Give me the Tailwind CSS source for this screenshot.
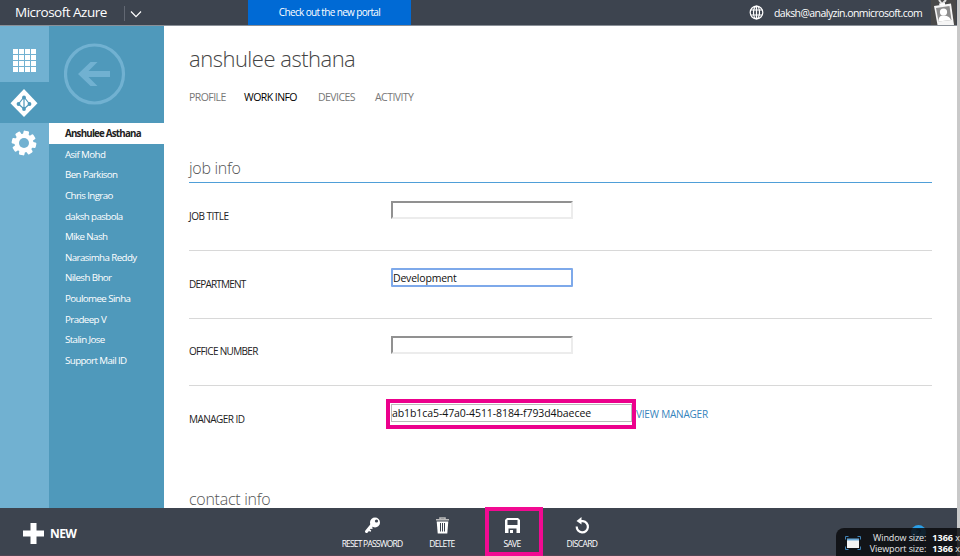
<!DOCTYPE html>
<html lang="en">
<head>
<meta charset="utf-8">
<title>Microsoft Azure</title>
<script src="https://cdn.jsdelivr.net/npm/@tailwindcss/browser@4"></script>
</head>
<body class="relative flex h-[556px] w-[960px] flex-col overflow-hidden bg-white font-['Open_Sans','Noto_Sans',sans-serif] text-[#222] whitespace-nowrap">
<header class="flex h-[26px] w-[957px] shrink-0 items-start border-b border-[#8a9098] bg-[#3d444f] text-white">
  <div class="w-[109px] pl-[15px] text-[13.500px] leading-[25px] tracking-[-0.500px]">Microsoft Azure</div>
  <div class="ml-[15px] mt-[6px] h-[15px] w-px bg-[#626873]"></div>
  <svg class="ml-[5px] mt-[10px] h-[9px] w-[12px]" viewBox="0 0 12 9" fill="none" stroke="#fff" stroke-width="1.2"><path d="M1 1.500 6 6.700 11 1.500"/></svg>
  <div class="ml-[106px] h-[25px] w-[163px] bg-[#006ad5] text-center text-[10px] font-medium leading-[25px] tracking-[-0.650px]">Check out the new portal</div>
  <svg class="ml-[338px] mt-[5px] h-[15px] w-[15px]" viewBox="0 0 15 15" fill="none" stroke="#fff" stroke-width="1.2"><circle cx="7.5" cy="7.5" r="6.300"/><ellipse cx="7.5" cy="7.5" rx="3" ry="6.300"/><path d="M7.500 1v13M1.800 5h11.400M1.800 10h11.400"/></svg>
  <div class="ml-[10px] w-[157px] text-[10.500px] font-medium leading-[26px] tracking-[-0.550px]">daksh@analyzin.onmicrosoft.com</div>
  <svg class="h-[25px] w-[25px] bg-[#494949]" viewBox="0 0 25 25"><path d="M8 0l3 4M15 0l-4 4" stroke="#ddd" stroke-width="2"/><path d="M3 6 20 3.500 23 25H6.500z" fill="#f5f5f5"/><path d="M5 8 18.500 6 20.500 20 7.500 21.500z" fill="#8d8d8d"/><path d="M8 3.500 14 3v2.500H8.500z" fill="#fff"/><circle cx="12.500" cy="12" r="3.600" fill="#fff"/><path d="M7.500 21.500c0-5 2-6 5-6s6 1 7.500 4.500z" fill="#fff"/></svg>
</header>
<div class="flex h-[482px] shrink-0">
  <nav class="flex w-[49px] flex-col bg-[#71b1d1]">
    <div class="flex h-[56px] items-center pl-[13px] pt-[13px]">
      <svg class="h-[23px] w-[23px]" viewBox="0 0 23 23" fill="#fff"><path d="M0 0h5v5H0zM6 0h5v5H6zM12 0h5v5h-5zM18 0h5v5h-5zM0 6h5v5H0zM6 6h5v5H6zM12 6h5v5h-5zM18 6h5v5h-5zM0 12h5v5H0zM6 12h5v5H6zM12 12h5v5h-5zM18 12h5v5h-5zM0 18h5v5H0zM6 18h5v5H6zM12 18h5v5h-5zM18 18h5v5h-5z"/></svg>
    </div>
    <div class="flex h-[41px] items-center bg-[#4f99bb] pl-[10px]">
      <svg class="h-[28px] w-[28px]" viewBox="0 0 28 28"><path d="M14 0 27.500 14.200 14 28 .5 14.200z" fill="#fff"/><g stroke="#4f99bb" stroke-width="1.200" fill="none"><path d="M14 8v12M14 8 8.500 15M14 8l5.500 7M8.500 15 14 20l5.500-5"/></g><g fill="#4f99bb"><circle cx="14" cy="8.500" r="1.900"/><circle cx="8.500" cy="15" r="1.900"/><circle cx="19.500" cy="15" r="1.900"/><circle cx="14" cy="20" r="1.900"/></g></svg>
    </div>
    <div class="pl-[11px] pt-[7px]">
      <svg class="h-[26px] w-[26px]" viewBox="-13 -13 26 26"><g fill="#fff"><circle r="9.600"/><rect x="-2.800" y="-12.300" width="5.600" height="24.600" rx="1.200" transform="rotate(12)"/><rect x="-2.800" y="-12.300" width="5.600" height="24.600" rx="1.200" transform="rotate(57)"/><rect x="-2.800" y="-12.300" width="5.600" height="24.600" rx="1.200" transform="rotate(102)"/><rect x="-2.800" y="-12.300" width="5.600" height="24.600" rx="1.200" transform="rotate(147)"/></g><circle r="5" fill="#71b1d1"/></svg>
    </div>
  </nav>
  <aside class="w-[115px] bg-[#4f99bb] text-[9.750px] font-medium tracking-[-0.600px] text-white">
    <div class="h-[97px] pl-[15px] pt-[17px]">
      <svg class="h-[62px] w-[62px]" viewBox="0 0 62 62"><circle cx="30.500" cy="31" r="29" fill="none" stroke="#71b1d1" stroke-width="3.200"/><path d="M14 31 26.500 19h7l-9 9H46v6H24.500l9 9h-7z" fill="#71b1d1"/></svg>
    </div>
    <ul class="leading-[21.600px] [&>li]:h-[20.650px] [&>li]:pl-[16px]">
      <li class="bg-white font-bold tracking-[-0.780px] text-[#222]">Anshulee Asthana</li>
      <li>Asif Mohd</li>
      <li>Ben Parkison</li>
      <li>Chris Ingrao</li>
      <li>daksh pasbola</li>
      <li>Mike Nash</li>
      <li>Narasimha Reddy</li>
      <li>Nilesh Bhor</li>
      <li>Poulomee Sinha</li>
      <li>Pradeep V</li>
      <li>Stalin Jose</li>
      <li>Support Mail ID</li>
    </ul>
  </aside>
  <main class="w-[793px] overflow-hidden pl-[25px] pr-[25px]">
    <h1 class="mt-[15px] h-[35px] text-[22px] font-light leading-[35px] tracking-[-0.500px] text-[#444]">anshulee asthana</h1>
    <div class="mt-[13px] flex h-[16px] gap-[20px] text-[10.500px] leading-[16px] tracking-[-0.550px] text-[#777]">
      <span class="w-[35px]">PROFILE</span><span class="w-[54px] text-black">WORK INFO</span><span class="w-[37px]">DEVICES</span><span>ACTIVITY</span>
    </div>
    <h2 class="mt-[50px] h-[28px] border-b border-[#4f9fd8] text-[16px] font-light leading-[26px] tracking-[-0.300px] text-[#555]">job info</h2>
    <div class="flex h-[68px] border-b border-[#d8d8d8] pt-[18px] text-[10px]">
      <label class="w-[202px] pt-[8px] leading-[14px] tracking-[-0.500px]">JOB TITLE</label>
      <div class="h-[18px] w-[182px] border-2 border-t-[#919191] border-r-[#ececec] border-b-[#ececec] border-l-[#919191]"></div>
    </div>
    <div class="flex h-[68px] border-b border-[#d8d8d8] pt-[17px] text-[10px]">
      <label class="w-[202px] pt-[9px] leading-[14px] tracking-[-0.800px]">DEPARTMENT</label>
      <div class="h-[19px] w-[182px] rounded-[1px] border-2 border-[#7ea9ea] text-[10.500px] leading-[17px] tracking-[-0.200px] text-[#111]">Development</div>
    </div>
    <div class="flex h-[67px] border-b border-[#d8d8d8] pt-[17px] text-[10px]">
      <label class="w-[202px] pt-[8px] leading-[14px] tracking-[-0.660px]">OFFICE NUMBER</label>
      <div class="h-[18px] w-[182px] border-2 border-t-[#919191] border-r-[#ececec] border-b-[#ececec] border-l-[#919191]"></div>
    </div>
    <div class="flex h-[98px] pt-[13px] text-[10px]">
      <label class="w-[197px] pt-[13px] leading-[14px] tracking-[-0.530px]">MANAGER ID</label>
      <div class="h-[30px] w-[250px] border-[4px] border-[#ec008c] pl-px pt-px">
        <div class="h-[18px] w-[241px] border border-[#bbb] text-[10.500px] leading-[17px] tracking-[-0.080px] text-[#111]">ab1b1ca5-47a0-4511-8184-f793d4baecee</div>
      </div>
      <a class="pt-[7px] text-[10px] leading-[16px] tracking-[-0.200px] text-[#3584bd]">VIEW MANAGER</a>
    </div>
    <h2 class="mt-[4px] text-[16px] font-light leading-[22px] tracking-[-0.270px] text-[#555]">contact info</h2>
  </main>
</div>
<footer class="relative flex h-[48px] w-[957px] shrink-0 border-b border-[#514553] bg-[#3d444f] text-[8.500px] font-medium text-white">
  <div class="flex w-[337px] items-center pl-[23px] pt-[3px]">
    <svg class="h-[21px] w-[21px]" viewBox="0 0 21 21" fill="#fff"><path d="M7.500 0h6v7.500H21v6h-7.500V21h-6v-7.500H0v-6h7.500z"/></svg>
    <span class="ml-[6px] pt-px text-[12px] font-bold leading-[20px] tracking-[-0.600px]">NEW</span>
  </div>
  <div class="flex w-[70px] flex-col items-center pt-[9px]">
    <svg class="h-[17px] w-[17px]" viewBox="0 0 17 17"><path d="M10.700 4.500 2.500 14.500" stroke="#fff" stroke-width="3" stroke-linecap="round"/><path d="m4 13 3 1M6.500 10.500l2 1" stroke="#fff" stroke-width="1.500"/><circle cx="11" cy="5.500" r="5" fill="#fff"/><circle cx="12.500" cy="4" r="1.600" fill="#3d444f"/></svg>
    <span class="mt-[4px] leading-[12px] tracking-[-0.800px]">RESET PASSWORD</span>
  </div>
  <div class="flex w-[70px] flex-col items-center pt-[9px]">
    <svg class="h-[17px] w-[15px]" viewBox="0 0 15 17"><path d="M1 2.800h13M5 2V1h5v1" stroke="#bbb" stroke-width="1.600" fill="none"/><path d="M1.700 4.500h11.600L12.300 16.500H2.700z" fill="#fff"/><path d="M5.500 6v8.500M7.500 6v8.500M9.500 6v8.500" stroke="#3d444f" stroke-width="1"/></svg>
    <span class="mt-[4px] leading-[12px] tracking-[-0.700px]">DELETE</span>
  </div>
  <div class="flex w-[70px] flex-col items-center pt-[9px]">
    <svg class="h-[17px] w-[17px]" viewBox="0 0 17 17"><path d="M3 1h11l2 2v13H1V3z" fill="#fff"/><path d="M3.500 3h10v5h-10zM4.500 11.500h8V16h-8z" fill="#3d444f"/><path d="M6 13h3v3H6z" fill="#fff"/></svg>
    <span class="mt-[4px] leading-[12px] tracking-[-0.700px]">SAVE</span>
  </div>
  <div class="flex w-[70px] flex-col items-center pt-[9px]">
    <svg class="h-[17px] w-[17px]" viewBox="0 0 17 17"><path d="M7 4.200h2a5.600 5.600 0 1 1-6.300 5.300" fill="none" stroke="#fff" stroke-width="2.200"/><path d="M7.500 0v7.500L2.500 4z" fill="#fff"/></svg>
    <span class="mt-[4px] leading-[12px] tracking-[-0.650px]">DISCARD</span>
  </div>
  <div class="absolute left-[485px] top-[-1px] h-[49px] w-[58px] border-[4px] border-[#f20a92]"></div>
  <div class="absolute left-[911px] top-[17px] h-[15px] w-[15px] rounded-full bg-[#2a9fe8] text-center text-[11px] font-bold leading-[15px] text-[#25506d]">?</div>
</footer>
<div class="absolute right-0 top-0 h-[556px] w-[3px] bg-[#c9c9c9]"></div>
<div class="absolute left-[836px] top-[528px] flex h-[28px] w-[124px] overflow-hidden rounded-tl-[8px] bg-[#0a0c0e]/85 text-[9px] text-[#e8e8e8]">
  <svg class="ml-[9px] mt-[8px] h-[14px] w-[16px] shrink-0" viewBox="0 0 16 14"><path d="M.5 3.500v-3h3M12.500.5h3v3M.5 10.500v3h3M12.500 13.500h3v-3" fill="none" stroke="#3f82b5"/><path d="M2 3h12v9H2z" fill="#f4f4f4"/><path d="M2 2.500h12v2H2z" fill="#6aa9d8"/></svg>
  <div class="w-[66px] pt-[4px] text-right leading-[11px] tracking-[-0.100px]">Window size:<br>Viewport size:</div>
  <div class="ml-[6px] pt-[4px] leading-[11px]"><b class="text-white">1366</b> x<br><b class="text-white">1366</b> x</div>
</div>
</body>
</html>
